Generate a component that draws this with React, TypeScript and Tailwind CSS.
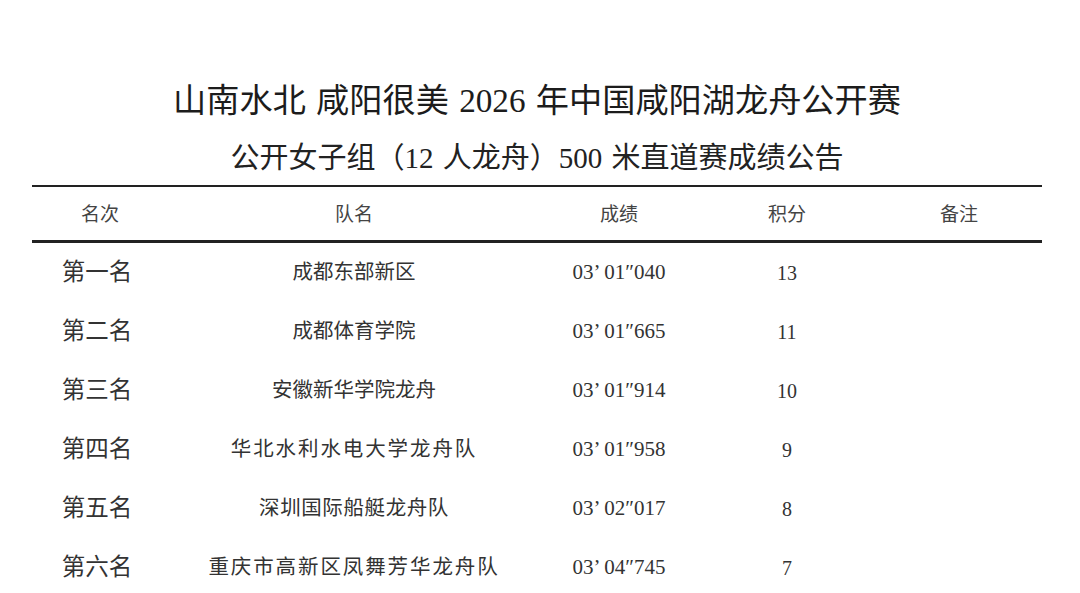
const serif = "font-['Liberation_Serif','Noto_Sans_CJK_SC',serif]";

interface ResultRow {
  rank: string;
  team: string;
  time: string;
  points: string;
  spacing: string;
}

const rows: ResultRow[] = [
  { rank: '第一名', team: '成都东部新区', time: '03’ 01″040', points: '13', spacing: 'tracking-[0px]' },
  { rank: '第二名', team: '成都体育学院', time: '03’ 01″665', points: '11', spacing: 'tracking-[0px]' },
  { rank: '第三名', team: '安徽新华学院龙舟', time: '03’ 01″914', points: '10', spacing: 'tracking-[0px]' },
  { rank: '第四名', team: '华北水利水电大学龙舟队', time: '03’ 01″958', points: '9', spacing: 'tracking-[1.9px]' },
  { rank: '第五名', team: '深圳国际船艇龙舟队', time: '03’ 02″017', points: '8', spacing: 'tracking-[0.6px]' },
  { rank: '第六名', team: '重庆市高新区凤舞芳华龙舟队', time: '03’ 04″745', points: '7', spacing: 'tracking-[1.9px]' },
];

const cols = 'grid grid-cols-[136px_372px_158px_178px_166px]';

export default function App() {
  return (
    <div className={`w-[1080px] h-[593px] overflow-hidden bg-white text-[#2a2a2a] ${serif}`}>
      <div className="pt-[81px] pr-[6px] text-center">
        <h1 className="text-[33.2px] leading-[40px] text-[#1c1c1c] [word-spacing:2px]">
          山南水北 咸阳很美 2026 年中国咸阳湖龙舟公开赛
        </h1>
        <h2 className="mt-[19px] text-[29px] leading-[36px] text-[#222] [word-spacing:2px]">
          公开女子组（12 人龙舟）500 米直道赛成绩公告
        </h2>
      </div>

      <div className="ml-[32px] w-[1010px] mt-[9px]">
        <div className="h-[2px] bg-[#222]" />
        <div className={`${cols} h-[53px] pt-[3px] items-center text-center text-[19px] text-[#444]`}>
          <span>名次</span>
          <span>队名</span>
          <span>成绩</span>
          <span>积分</span>
          <span>备注</span>
        </div>
        <div className="h-[3px] bg-[#222]" />

        {rows.map((row) => (
          <div key={row.rank} className={`${cols} h-[59px] items-center text-center text-[#333]`}>
            <span className="text-[23.5px] pr-[6px]">{row.rank}</span>
            <span className={`text-[20.5px] ${row.spacing}`}>{row.team}</span>
            <span className="text-[21px]">{row.time}</span>
            <span className="text-[20px]">{row.points}</span>
            <span />
          </div>
        ))}
      </div>
    </div>
  );
}
